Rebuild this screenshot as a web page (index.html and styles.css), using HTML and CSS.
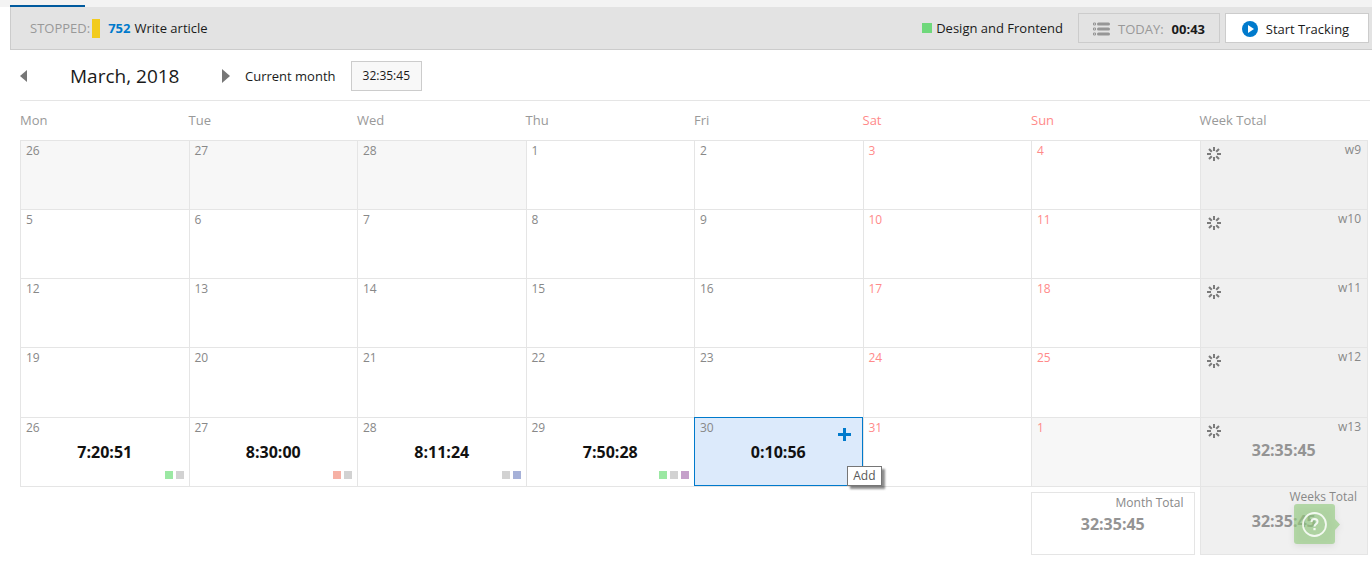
FILE: index.html
```html
<!DOCTYPE html>
<html lang="en">
<head>
<meta charset="utf-8">
<title>Time tracking – March, 2018</title>
<link rel="stylesheet" href="styles.css">
</head>
<body>
<svg class="defs" aria-hidden="true">
  <symbol id="spinner" viewBox="0 0 14 14">
    <path d="M7 0v4M7 10v4M0 7h4M10 7h4M2 2l2.800 2.800M9.200 9.200l2.800 2.800M12 2L9.200 4.800M4.800 9.200L2 12" fill="none" stroke="#7b7b7b" stroke-width="2"/>
  </symbol>
</svg>

<div class="tabstrip"><div class="tab-active"></div></div>

<header class="tracker">
  <span class="muted">STOPPED:</span>
  <span class="task-mark"></span>
  <a class="task-id" href="#">752</a>
  <span class="task-name">Write article</span>
  <span class="activity"><i class="activity-mark"></i>Design and Frontend</span>
  <button class="today" type="button">
    <svg width="17" height="14" viewBox="0 0 17 14" aria-hidden="true">
      <path d="M5.500 2h10M5.500 7h10M5.500 12h10" stroke="#969696" stroke-width="3" stroke-linecap="round"/>
      <path d="M.5 1h2v2h-2zM.5 6h2v2h-2zM.5 11h2v2h-2z" fill="none" stroke="#969696"/>
    </svg>
    <span class="muted">TODAY:</span>
    <b>00:43</b>
  </button>
  <button class="start" type="button">
    <svg width="16" height="16" viewBox="0 0 16 16" aria-hidden="true">
      <circle cx="8" cy="8" r="8" fill="#007acc"/>
      <path d="M6 4v8l6-4z" fill="#fff"/>
    </svg>
    Start Tracking
  </button>
</header>

<main class="page">
  <nav class="monthbar">
    <button class="arrow" type="button" aria-label="Previous month">
      <svg width="7" height="12" viewBox="0 0 7 12"><path d="M7 0v12L0 6z" fill="#767676"/></svg>
    </button>
    <h1 class="month">March, 2018</h1>
    <button class="arrow" type="button" aria-label="Next month">
      <svg width="8" height="14" viewBox="0 0 8 14"><path d="M0 0v14l8-7z" fill="#767676"/></svg>
    </button>
    <a class="current" href="#">Current month</a>
    <span class="month-sum">32:35:45</span>
  </nav>

  <table class="calendar">
    <thead>
      <tr><th>Mon</th><th>Tue</th><th>Wed</th><th>Thu</th><th>Fri</th><th class="weekend">Sat</th><th class="weekend">Sun</th><th>Week Total</th></tr>
    </thead>
    <tbody>
      <tr>
        <td class="other"><div class="day">26</div></td><td class="other"><div class="day">27</div></td><td class="other"><div class="day">28</div></td><td><div class="day">1</div></td><td><div class="day">2</div></td><td class="weekend"><div class="day">3</div></td><td class="weekend"><div class="day">4</div></td>
        <td class="week"><div class="week-head"><svg class="spinner"><use href="#spinner"/></svg>w9</div></td>
      </tr>
      <tr>
        <td><div class="day">5</div></td><td><div class="day">6</div></td><td><div class="day">7</div></td><td><div class="day">8</div></td><td><div class="day">9</div></td><td class="weekend"><div class="day">10</div></td><td class="weekend"><div class="day">11</div></td>
        <td class="week"><div class="week-head"><svg class="spinner"><use href="#spinner"/></svg>w10</div></td>
      </tr>
      <tr>
        <td><div class="day">12</div></td><td><div class="day">13</div></td><td><div class="day">14</div></td><td><div class="day">15</div></td><td><div class="day">16</div></td><td class="weekend"><div class="day">17</div></td><td class="weekend"><div class="day">18</div></td>
        <td class="week"><div class="week-head"><svg class="spinner"><use href="#spinner"/></svg>w11</div></td>
      </tr>
      <tr>
        <td><div class="day">19</div></td><td><div class="day">20</div></td><td><div class="day">21</div></td><td><div class="day">22</div></td><td><div class="day">23</div></td><td class="weekend"><div class="day">24</div></td><td class="weekend"><div class="day">25</div></td>
        <td class="week"><div class="week-head"><svg class="spinner"><use href="#spinner"/></svg>w12</div></td>
      </tr>
      <tr>
        <td><div class="day">26</div><div class="time">7:20:51</div><div class="marks"><i class="green"></i><i class="grey"></i></div></td>
        <td><div class="day">27</div><div class="time">8:30:00</div><div class="marks"><i class="red"></i><i class="grey"></i></div></td>
        <td><div class="day">28</div><div class="time">8:11:24</div><div class="marks"><i class="grey"></i><i class="blue"></i></div></td>
        <td><div class="day">29</div><div class="time">7:50:28</div><div class="marks"><i class="green"></i><i class="grey"></i><i class="purple"></i></div></td>
        <td class="selected">
          <div class="day">30</div><div class="time">0:10:56</div>
          <button class="add" type="button" aria-label="Add">
            <svg width="13" height="13" viewBox="0 0 13 13"><path d="M6.500 0v13M0 6.500h13" stroke="#007acc" stroke-width="3"/></svg>
          </button>
          <div class="tooltip" role="tooltip">Add</div>
        </td>
        <td class="weekend"><div class="day">31</div></td>
        <td class="weekend other next"><div class="day">1</div></td>
        <td class="week"><div class="week-head"><svg class="spinner"><use href="#spinner"/></svg>w13</div><div class="time">32:35:45</div></td>
      </tr>
    </tbody>
    <tfoot>
      <tr>
        <td colspan="6"></td>
        <td><div class="month-total"><div class="total-label">Month Total</div><div class="time">32:35:45</div></div></td>
        <td class="week weeks-total"><div class="total-label">Weeks Total</div><div class="time">32:35:45</div></td>
      </tr>
    </tfoot>
  </table>
</main>

<button class="help" type="button" aria-label="Help">
  <svg width="46" height="40" viewBox="0 0 46 40">
    <path d="M3 0h35q3 0 3 3v12l5 5.500-5 5.500v11q0 3-3 3H3q-3 0-3-3V3q0-3 3-3z" fill="#95cc81" fill-opacity=".65"/>
    <g fill="none" stroke="#fff" stroke-opacity=".85">
      <circle cx="20.500" cy="20.500" r="11.500" stroke-width="1.800"/>
      <path d="M17.500 18q0-3 3-3t3 2.700q0 1.400-1.600 2.400-1.400.9-1.400 2.400" stroke-width="2"/>
      <path d="M20.500 24v2.200" stroke-width="2.200"/>
    </g>
  </svg>
</button>
</body>
</html>
```

FILE: styles.css
```css
* { box-sizing: border-box; }

body {
  margin: 0;
  background: #fff;
  color: #1a1a1a;
  font: 13px/18px "Open Sans", "Noto Sans", sans-serif;
}

button {
  font: inherit;
  color: inherit;
  padding: 0;
  border: 0;
  background: none;
  cursor: pointer;
}

a { color: inherit; text-decoration: none; }
svg { display: block; }
.defs { position: absolute; width: 0; height: 0; }
.muted { color: #999; }

/* Tab strip */
.tabstrip {
  display: flex;
  align-items: flex-end;
  height: 7px;
  padding-left: 10px;
  background: #f3f3f3;
}
.tab-active { width: 75px; height: 2px; background: #005a9e; }

/* Tracker bar */
.tracker {
  display: flex;
  align-items: center;
  height: 43px;
  margin-left: 10px;
  padding: 0 3px 0 19px;
  background: #e3e3e3;
  border: 1px solid #ccc;
  border-width: 0 0 1px 1px;
}
.task-mark { width: 8px; height: 19px; margin: 0 8px 0 2px; background: #f2cb1d; }
.task-id { margin-right: 4px; color: #007acc; font-weight: 700; }
.activity { display: flex; align-items: center; margin-left: auto; }
.activity-mark { width: 10px; height: 10px; margin-right: 4px; background: #6fd87b; }
.today, .start {
  display: flex;
  align-items: center;
  justify-content: center;
  height: 30px;
  padding-top: 2px;
  border: 1px solid #ccc;
}
.today { gap: 8px; width: 142px; margin: 0 5px 0 15px; }
.start { gap: 8px; width: 144px; padding-right: 3px; background: #fff; }

/* Month navigation */
.page { padding: 0 4px 0 20px; }
.monthbar {
  display: flex;
  align-items: center;
  height: 51px;
  margin-right: -2px;
  padding-top: 2px;
  border-bottom: 1px solid #e5e5e5;
}
.arrow { width: 8px; }
.month {
  width: 152px;
  margin: 0 42px 0 0;
  padding-left: 42px;
  font-size: 19px;
  line-height: 28px;
  font-weight: 400;
  white-space: nowrap;
}
.current { margin: 0 15px; }
.month-sum {
  padding: 5px 11px;
  border: 1px solid #ccc;
  background: #f8f8f8;
  font-size: 12px;
}

/* Calendar */
.calendar {
  width: 100%;
  table-layout: fixed;
  border-collapse: separate;
  border-spacing: 0;
}
.calendar th {
  height: 39px;
  padding: 0 0 2px;
  color: #999;
  font-weight: 400;
  text-align: left;
}
.calendar td {
  height: 69px;
  padding: 0;
  vertical-align: top;
  font-size: 12px;
  line-height: 16px;
  color: #888;
}
.calendar tbody tr:nth-child(4) td { height: 70px; }
.calendar tbody td { border: 1px solid #e5e5e5; border-width: 1px 0 0 1px; }
.calendar th.weekend, .calendar td.weekend { color: #ff8a8a; }
.calendar .other { background: #f7f7f7; }
.calendar .next { color: #ffb0b0; }
.calendar tbody .week, .weeks-total {
  background: #f0f0f0;
  border: 1px solid #e5e5e5;
  border-width: 1px 1px 0 1px;
}
.calendar .weeks-total { border-width: 1px; }

.day { padding: 2px 5px 0; }
.time {
  color: #111;
  font-size: 16px;
  line-height: 20px;
  font-weight: 700;
  text-align: center;
}
.day + .time { margin-top: 6px; }
.marks {
  display: flex;
  justify-content: flex-end;
  gap: 3px;
  margin-top: 9px;
  padding-right: 5px;
}
.marks i { width: 8px; height: 8px; }
.green { background: #9be8a3; }
.grey { background: #d2d2d2; }
.red { background: #f6b1a5; }
.blue { background: #a6b1d8; }
.purple { background: #c5a0ca; }

.calendar tbody .selected {
  position: relative;
  background: #dceafb;
  border: 1px solid #007acc;
}
.add { position: absolute; top: 10px; right: 11px; }
.tooltip {
  position: absolute;
  top: 48px;
  right: -20px;
  z-index: 1;
  padding: 0 5px;
  border: 1px solid #767676;
  background: #fff;
  box-shadow: 3px 3px 2px rgba(0, 0, 0, .45);
  color: #575757;
  line-height: 18px;
}

.week-head {
  display: flex;
  justify-content: space-between;
  height: 22px;
  padding: 1px 6px 0;
}
.spinner { width: 14px; height: 14px; margin-top: 5px; }
.week .time, .month-total .time { color: #949494; }

/* Totals */
.calendar tfoot td:first-child,
.calendar tfoot td:nth-child(2) { border-top: 1px solid #e5e5e5; }
.month-total {
  height: 63px;
  margin: 5px 5px 0 0;
  padding-top: 2px;
  border: 1px solid #e5e5e5;
}
.total-label { padding: 2px 10px 0; text-align: right; }
.month-total .total-label { padding-top: 0; }
.month-total .time { margin-top: 3px; }
.weeks-total .time { margin-top: 6px; }

/* Help bubble */
.help { position: fixed; right: 32px; bottom: 17px; filter: drop-shadow(0 2px 3px rgba(0, 0, 0, .12)); }
```
